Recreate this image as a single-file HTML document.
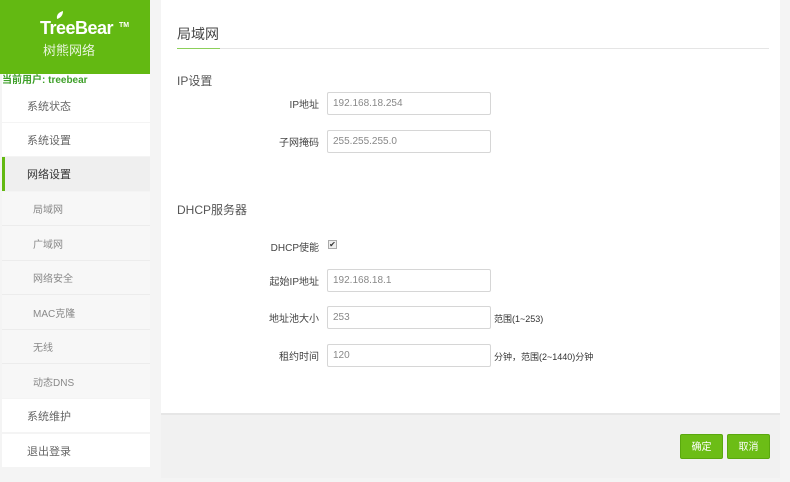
<!DOCTYPE html>
<html><head><meta charset="utf-8"><style>
*{box-sizing:border-box;margin:0;padding:0}
body{width:790px;height:482px;background:#f4f4f4;font-family:"Liberation Sans","Noto Sans CJK SC",sans-serif;position:relative;overflow:hidden;color:#555}
.logo{position:absolute;left:0;top:0;width:150px;height:74px;background:#63b912;color:#fff}
.logo .t{position:absolute;left:40px;top:18px;font-size:18px;font-weight:bold;letter-spacing:-0.5px}
.logo .tm{position:absolute;left:119px;top:22px;font-size:7px;font-weight:bold}
.logo .c{position:absolute;left:43px;top:40px;font-size:13px;color:#e8f5dc;letter-spacing:0px}
.user{position:absolute;left:2px;top:74px;width:148px;height:15px;background:#fff;font-size:10px;font-weight:bold;color:#3fa02a;line-height:14px}
.nav{position:absolute;left:2px;width:148px;background:#fff;font-size:11px;color:#666;padding-left:25px;display:flex;align-items:center}
.sub{position:absolute;left:2px;width:148px;background:#f7f7f7;font-size:10px;color:#888;padding-left:31px;display:flex;align-items:center;border-bottom:1px solid #ececec}
.main{position:absolute;left:161px;top:0;width:619px;height:413px;background:#fff}
.foot{position:absolute;left:161px;top:413px;width:619px;height:65px;background:#f1f1f1;border-top:2px solid #e6e6e6}
.lbl{position:absolute;width:150px;text-align:right;font-size:10px;color:#444}
.inp{position:absolute;left:327px;width:164px;height:23px;border:1px solid #d6d6d6;border-radius:2px;font-size:10px;color:#888;padding-left:5px;line-height:21px;background:#fff}
.btn{position:absolute;top:434px;height:25px;background:#6cbd16;color:#fff;font-size:10px;text-align:center;line-height:25px;border-radius:2px;border:1px solid #5aa80e}
</style></head><body>
<div class="logo"><div class="t">TreeBear</div><div class="tm">TM</div><div class="c">树熊网络</div>
<svg style="position:absolute;left:56px;top:11px" width="8" height="9"><path d="M1 8 Q0 2 7 0 Q7 6 1 8Z" fill="#fff"/></svg></div>
<div class="user">当前用户: treebear</div>
<div class="nav" style="top:89px;height:33px">系统状态</div>
<div class="nav" style="top:123px;height:33px">系统设置</div>
<div class="nav" style="top:157px;height:34px;background:#efefef;color:#333;border-left:3px solid #63b912;padding-left:22px">网络设置</div>
<div class="sub" style="top:192px;height:34px">局域网</div>
<div class="sub" style="top:226px;height:35px">广域网</div>
<div class="sub" style="top:261px;height:34px">网络安全</div>
<div class="sub" style="top:295px;height:35px">MAC克隆</div>
<div class="sub" style="top:330px;height:34px">无线</div>
<div class="sub" style="top:364px;height:34px;border:none">动态DNS</div>
<div class="nav" style="top:399px;height:33px">系统维护</div>
<div class="nav" style="top:434px;height:33px">退出登录</div>
<div class="main">
<div style="position:absolute;left:16px;top:24px;font-size:14px;color:#444">局域网</div>
<div style="position:absolute;left:16px;top:48px;width:592px;height:1px;background:#e5e5e5"></div>
<div style="position:absolute;left:16px;top:48px;width:43px;height:1px;background:#8ccf5a"></div>
<div style="position:absolute;left:16px;top:72px;font-size:12px;color:#555">IP设置</div>
<div style="position:absolute;left:16px;top:201px;font-size:12px;color:#555">DHCP服务器</div>
</div>
<div class="lbl" style="left:169px;top:96px">IP地址</div><div class="inp" style="top:92px">192.168.18.254</div>
<div class="lbl" style="left:169px;top:134px">子网掩码</div><div class="inp" style="top:130px">255.255.255.0</div>
<div class="lbl" style="left:169px;top:239px">DHCP使能</div>
<div style="position:absolute;left:328px;top:240px;width:9px;height:9px;border:1px solid #aaa;background:#eee;font-size:8px;line-height:7px;text-align:center;color:#333">✔</div>
<div class="lbl" style="left:169px;top:273px">起始IP地址</div><div class="inp" style="top:269px">192.168.18.1</div>
<div class="lbl" style="left:169px;top:310px">地址池大小</div><div class="inp" style="top:306px">253</div>
<div style="position:absolute;left:494px;top:312px;font-size:9px;color:#333">范围(1~253)</div>
<div class="lbl" style="left:169px;top:348px">租约时间</div><div class="inp" style="top:344px">120</div>
<div style="position:absolute;left:494px;top:350px;font-size:9px;color:#333">分钟，范围(2~1440)分钟</div>
<div class="foot"></div>
<div class="btn" style="left:680px;width:43px">确定</div>
<div class="btn" style="left:727px;width:43px">取消</div>
</body></html>
